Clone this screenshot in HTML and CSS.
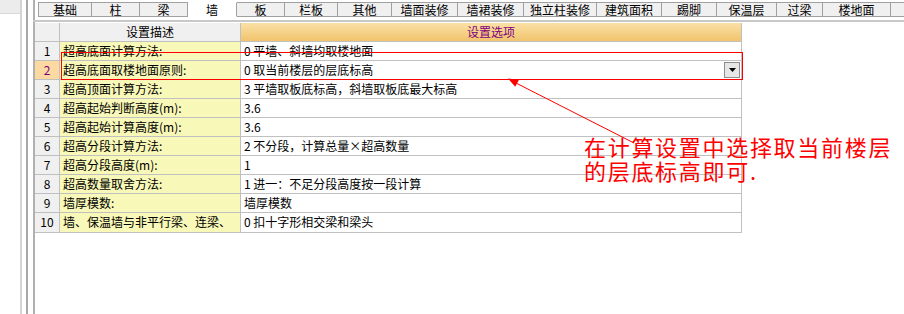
FILE: index.html
```html
<!DOCTYPE html>
<html lang="zh">
<head>
<meta charset="utf-8">
<link rel="stylesheet" href="styles.css">
</head>
<body>
<div class="page">
  <div class="side">
    <div class="tree"><div class="tree-top"></div></div>
    <div class="rail r1"></div>
    <div class="rail r2"></div>
    <div class="rail r3"></div>
  </div>
  <div class="main">
    <div class="tabs">
      <div class="tab w54">基础</div>
      <div class="tab w48">柱</div>
      <div class="tab w48">梁</div>
      <div class="tab active w49">墙</div>
      <div class="tab w48">板</div>
      <div class="tab w53">栏板</div>
      <div class="tab w54">其他</div>
      <div class="tab w66">墙面装修</div>
      <div class="tab w66">墙裙装修</div>
      <div class="tab w73">独立柱装修</div>
      <div class="tab w65">建筑面积</div>
      <div class="tab w55">踢脚</div>
      <div class="tab w60">保温层</div>
      <div class="tab w46">过梁</div>
      <div class="tab w68">楼地面</div>
      <div class="tab w20"></div>
    </div>
    <div class="sep"></div>
    <div class="grid">
      <div class="c num hd"></div>
      <div class="c hd desc-hd">设置描述</div>
      <div class="c hd opt-hd">设置选项</div>

      <div class="c num">1</div><div class="c desc">超高底面计算方法:</div><div class="c val">0 平墙、斜墙均取楼地面</div>
      <div class="c num sel">2</div><div class="c desc">超高底面取楼地面原则:</div><div class="c val combo"><span>0 取当前楼层的层底标高</span><span class="drop"><svg width="7" height="4" viewBox="0 0 7 4"><path d="M0 0H7L3.5 4Z" fill="#000"/></svg></span></div>
      <div class="c num">3</div><div class="c desc">超高顶面计算方法:</div><div class="c val">3 平墙取板底标高，斜墙取板底最大标高</div>
      <div class="c num">4</div><div class="c desc">超高起始判断高度(m):</div><div class="c val">3.6</div>
      <div class="c num">5</div><div class="c desc">超高起始计算高度(m):</div><div class="c val">3.6</div>
      <div class="c num">6</div><div class="c desc">超高分段计算方法:</div><div class="c val">2 不分段，计算总量×超高数量</div>
      <div class="c num">7</div><div class="c desc">超高分段高度(m):</div><div class="c val">1</div>
      <div class="c num">8</div><div class="c desc">超高数量取舍方法:</div><div class="c val">1 进一：不足分段高度按一段计算</div>
      <div class="c num">9</div><div class="c desc">墙厚模数:</div><div class="c val">墙厚模数</div>
      <div class="c num">10</div><div class="c desc">墙、保温墙与非平行梁、连梁、</div><div class="c val">0 扣十字形相交梁和梁头</div>
    </div>
  </div>

  <div class="mark"></div>
  <svg class="arrow" width="904" height="314" viewBox="0 0 904 314">
    <line x1="634" y1="143" x2="514" y2="82" stroke="#ff0000" stroke-width="1"/>
    <polygon points="508,78.5 515.2,86.8 519,79.8" fill="#ff0000"/>
  </svg>
  <div class="note">在计算设置中选择取当前楼层<br>的层底标高即可.</div>
</div>
</body>
</html>
```

FILE: styles.css
```css
html, body {
  margin: 0;
  padding: 0;
  background: #ffffff;
}

body {
  font-family: "Noto Sans CJK SC", "Liberation Sans", sans-serif;
  font-size: 12px;
  color: #000;
}

.page {
  position: relative;
  width: 904px;
  height: 314px;
  display: flex;
  overflow: hidden;
}

.side {
  width: 35px;
  flex: none;
  display: flex;
}

.tree {
  width: 20px;
  flex: none;
  background: #ffffff;
}

.tree-top {
  height: 13px;
  background: #ececec;
  border-bottom: 1px solid #d8d8d8;
}

.rail {
  flex: none;
}

.r1 {
  width: 2px;
  background: #d4d4d4;
  margin-right: 4px;
}

.r2 {
  width: 2px;
  background: #a8a8a8;
  margin-right: 5px;
}

.r3 {
  width: 2px;
  background: #b0b0b0;
}

.main {
  flex: 1;
  display: flex;
  flex-direction: column;
}

.tabs {
  display: flex;
  padding-top: 2px;
  padding-left: 3px;
  height: 15px;
}

.tab {
  box-sizing: border-box;
  height: 15px;
  line-height: 13px;
  font-size: 12px;
  text-align: center;
  background: #f0f0f0;
  border: 1px solid #a0a0a0;
  border-left: none;
  white-space: nowrap;
}

.tab:first-child {
  border-left: 1px solid #a0a0a0;
}

.tab.active {
  background: #ffffff;
  border-top-color: #ffffff;
  border-bottom-color: #ffffff;
}

.w20 { width: 20px; }
.w46 { width: 46px; }
.w48 { width: 48px; }
.w49 { width: 49px; }
.w53 { width: 53px; }
.w54 { width: 54px; }
.w55 { width: 55px; }
.w60 { width: 60px; }
.w65 { width: 65px; }
.w66 { width: 66px; }
.w68 { width: 68px; }
.w73 { width: 73px; }

.sep {
  margin-top: 3px;
  height: 2px;
  background: #c8c8c8;
  margin-left: -2px;
}

.grid {
  margin-top: 1px;
  display: grid;
  grid-template-columns: 25px 181px 501px;
  grid-auto-rows: 19px;
  width: 707px;
  border-bottom: 1px solid #c0c0c0;
}

.c {
  box-sizing: border-box;
  border-right: 1px solid #c0c0c0;
  border-bottom: 1px solid #c0c0c0;
  line-height: 18px;
  padding-left: 3px;
  white-space: nowrap;
  overflow: hidden;
}

.grid > .c:nth-last-child(-n+3) {
  border-bottom: none;
}

.num {
  background: #f0f0f0;
  text-align: center;
  padding-left: 0;
}

.num.sel {
  background: #fcd9a0;
  color: #800080;
}

.hd {
  text-align: center;
  padding-left: 0;
}

.desc-hd {
  background: #f0f0f0;
}

.opt-hd {
  background: linear-gradient(#fae0a6, #f1c46c);
  color: #800080;
}

.desc {
  background: #f8f8b8;
}

.val {
  background: #ffffff;
}

.combo {
  display: flex;
  justify-content: space-between;
  align-items: center;
  padding-right: 1px;
}

.drop {
  box-sizing: border-box;
  width: 16px;
  height: 16px;
  background: #e6e6e6;
  border: 1px solid #8c8c8c;
  display: flex;
  align-items: center;
  justify-content: center;
}

.mark {
  position: absolute;
  left: 61px;
  top: 52px;
  width: 682px;
  height: 28px;
  box-sizing: border-box;
  border: 1px solid #ff0000;
}

.arrow {
  position: absolute;
  left: 0;
  top: 0;
}

.note {
  position: absolute;
  left: 584px;
  top: 134px;
  font-size: 22px;
  line-height: 24px;
  letter-spacing: 1.7px;
  color: #ff0000;
  white-space: nowrap;
}
```
